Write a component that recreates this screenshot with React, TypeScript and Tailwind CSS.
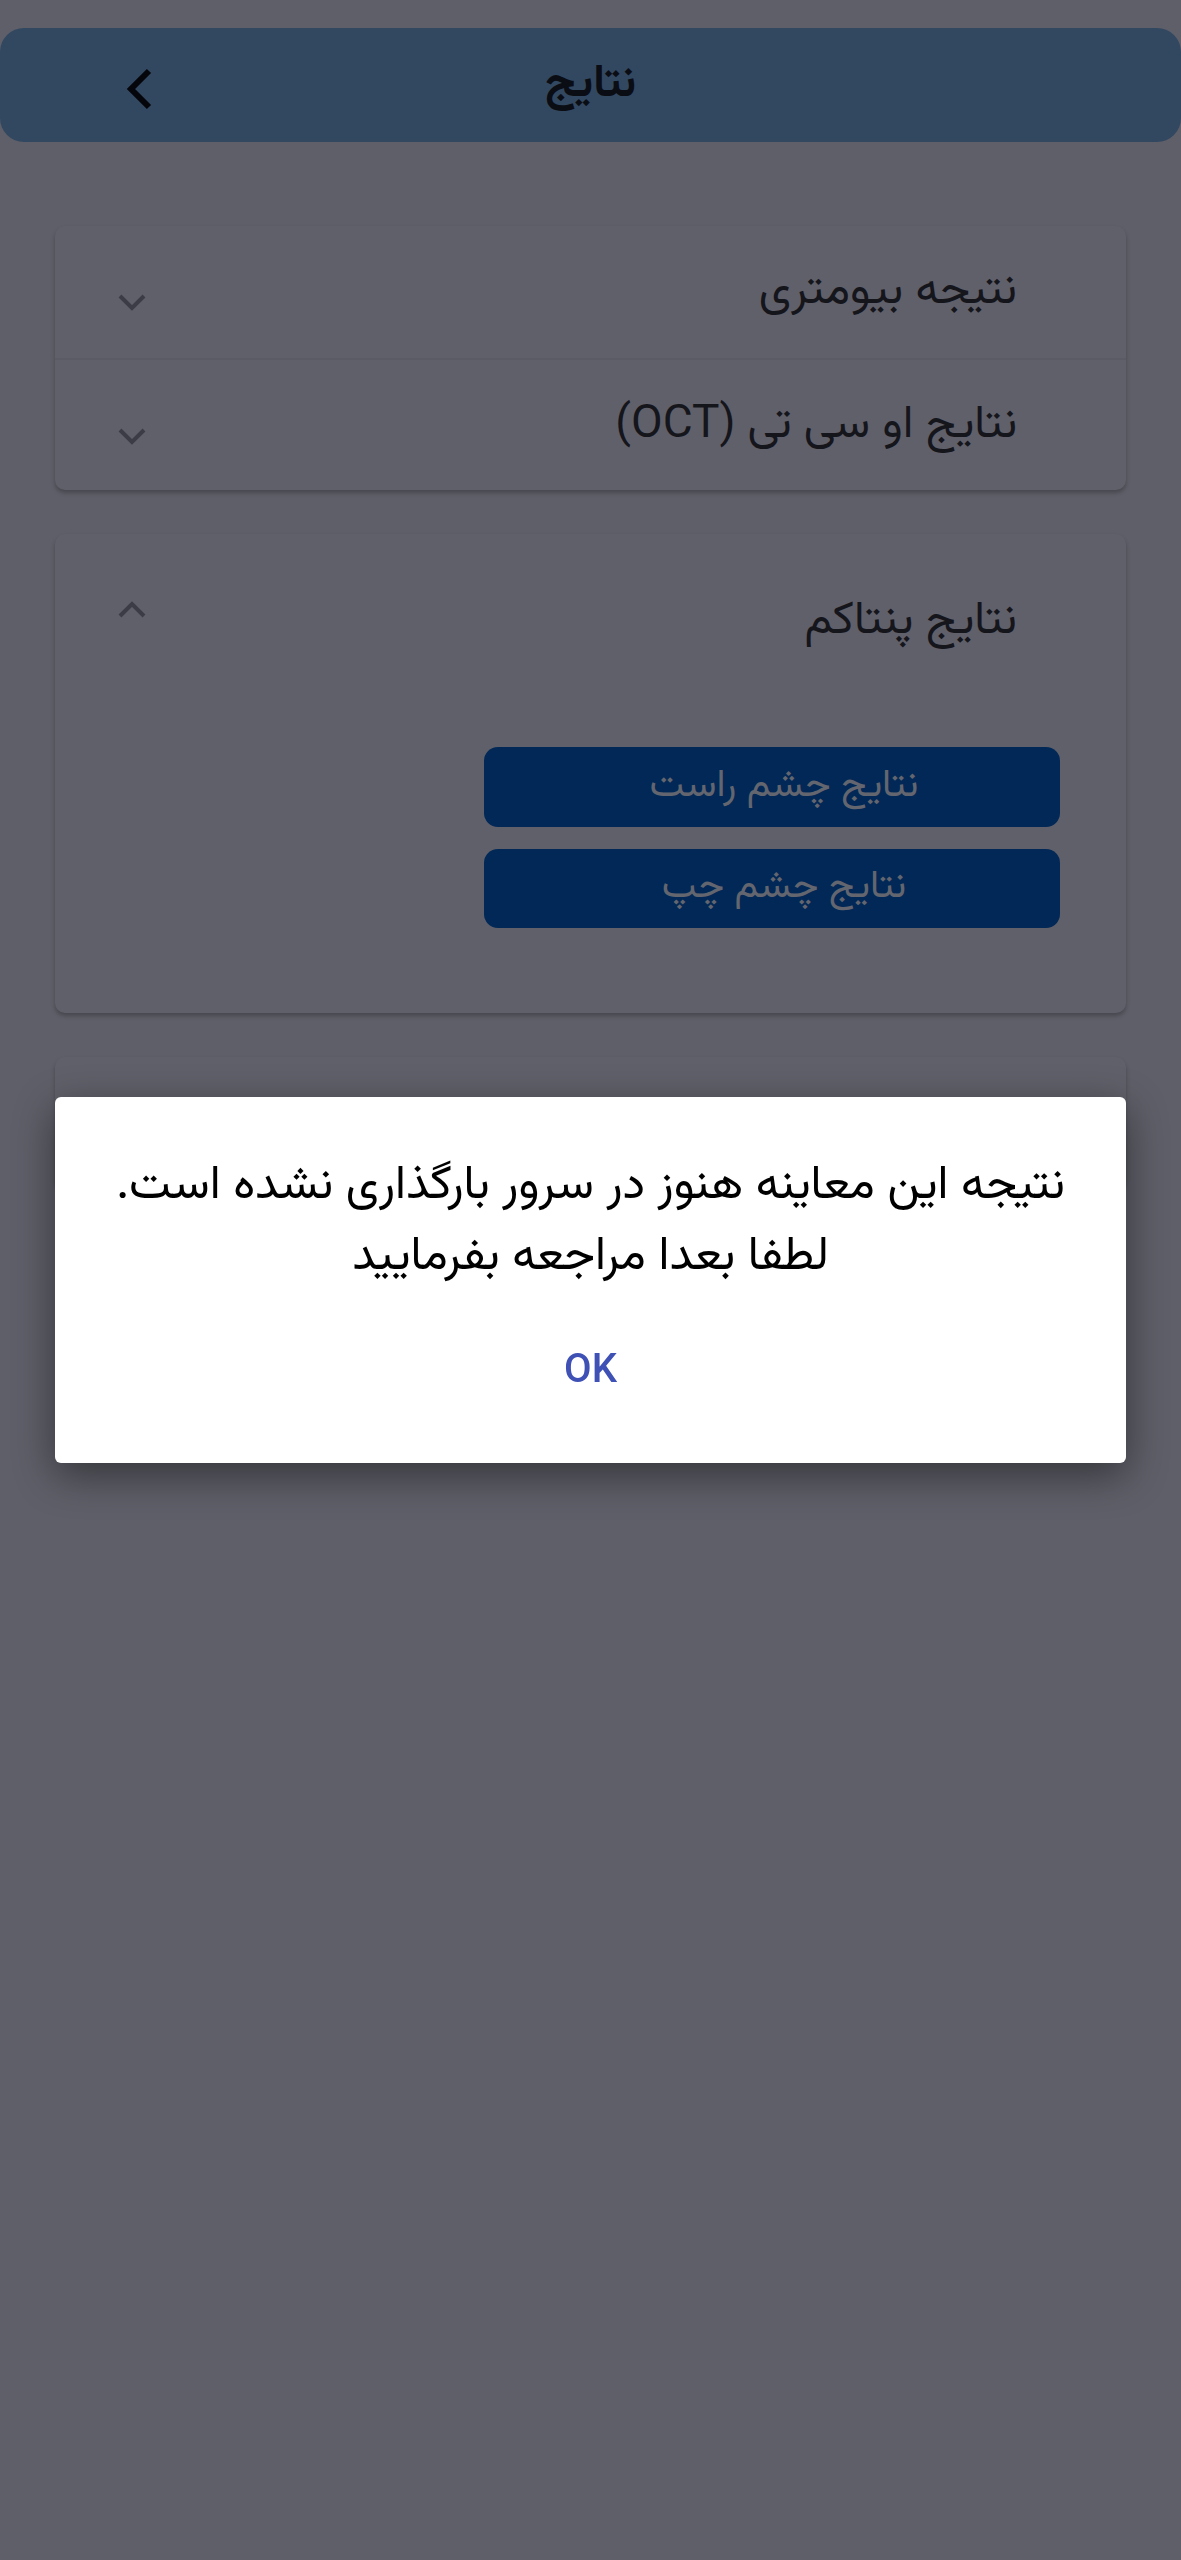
// Results screen (نتایج) with the "result not uploaded yet" dialog open over a dimmed page.
// Page colours below are the dimmed (scrimmed) tones as they appear behind the dialog.

import { useState } from "react";

const FONT = { fontFamily: "Vazirmatn, 'Noto Sans Arabic', 'DejaVu Sans', sans-serif" };

function Chevron({ up = false }: { up?: boolean }) {
  return (
    <svg width="30" height="18" viewBox="0 0 30 18" className="shrink-0">
      <path
        d={up ? "M3 16 L15 4 L27 16" : "M3 2 L15 14 L27 2"}
        fill="none"
        stroke="#3b3c45"
        strokeWidth="4"
      />
    </svg>
  );
}

function Row({ title, divider = false }: { title: string; divider?: boolean }) {
  return (
    <div
      className={`flex h-[132px] items-start justify-between pr-[109px] pl-[62px] ${divider ? "border-t-2 border-[#5b5b65]" : ""}`}
    >
      <span className="mt-[40px] text-[46px] leading-[52px] text-[#15151c]">{title}</span>
      <span className="mt-[68px]">
        <Chevron />
      </span>
    </div>
  );
}

export default function App() {
  const [open, setOpen] = useState(true);

  return (
    <div dir="rtl" style={FONT} className="relative min-h-[2560px] bg-[#5f5f69] pt-[28px]">
      <header className="relative flex h-[114px] items-center justify-center rounded-[24px] bg-[#324861]">
        <h1 className="text-[45px] font-bold leading-none text-[#0b0d14]">نتایج</h1>
        <button type="button" className="absolute left-[124px] top-[40px]">
          <svg width="30" height="42" viewBox="0 0 30 42">
            <path d="M25 3 L7 21 L25 39" fill="none" stroke="#05060b" strokeWidth="6" />
          </svg>
        </button>
      </header>

      <div className="mx-[55px] mt-[84px] flex flex-col gap-[44px]">
        <div className="overflow-hidden rounded-[10px] bg-[#60606a] shadow-[0_3px_4px_rgba(0,0,0,0.25)]">
          <Row title="نتیجه بیومتری" />
          <Row title="نتایج او سی تی (OCT)" divider />
        </div>

        <div className="h-[479px] rounded-[10px] bg-[#60606a] shadow-[0_3px_4px_rgba(0,0,0,0.25)]">
          <div className="flex items-start justify-between pr-[109px] pl-[62px]">
            <span className="mt-[62px] text-[46px] leading-[52px] text-[#15151c]">نتایج پنتاکم</span>
            <span className="mt-[66px]">
              <Chevron up />
            </span>
          </div>
          <div className="mt-[99px] flex flex-col gap-[22px] pr-[66px]">
            <button
              type="button"
              className="h-[80px] w-[576px] rounded-[14px] bg-[#012856] pl-[24px] text-[39px] text-[#63656f]"
            >
              نتایج چشم راست
            </button>
            <button
              type="button"
              className="h-[79px] w-[576px] rounded-[14px] bg-[#012856] pl-[24px] text-[39px] text-[#63656f]"
            >
              نتایج چشم چپ
            </button>
          </div>
        </div>

        <div className="h-[132px] rounded-[10px] bg-[#60606a] shadow-[0_3px_4px_rgba(0,0,0,0.25)]" />
      </div>

      {open && (
        <div className="fixed inset-0 flex items-center justify-center px-[55px]">
          <div className="flex h-[366px] w-full flex-col items-center rounded-[6px] bg-white pt-[54px] shadow-[0_12px_40px_rgba(0,0,0,0.45)]">
            <p className="text-center text-[47px] leading-[71px] text-black">
              نتیجه این معاینه هنوز در سرور بارگذاری نشده است.
              <br />
              لطفا بعدا مراجعه بفرمایید
            </p>
            <button
              type="button"
              onClick={() => setOpen(false)}
              className="mt-[56px] text-[40px] font-medium leading-none text-[#3f51b5]"
              style={{ fontFamily: "Roboto, sans-serif" }}
            >
              OK
            </button>
          </div>
        </div>
      )}
    </div>
  );
}
